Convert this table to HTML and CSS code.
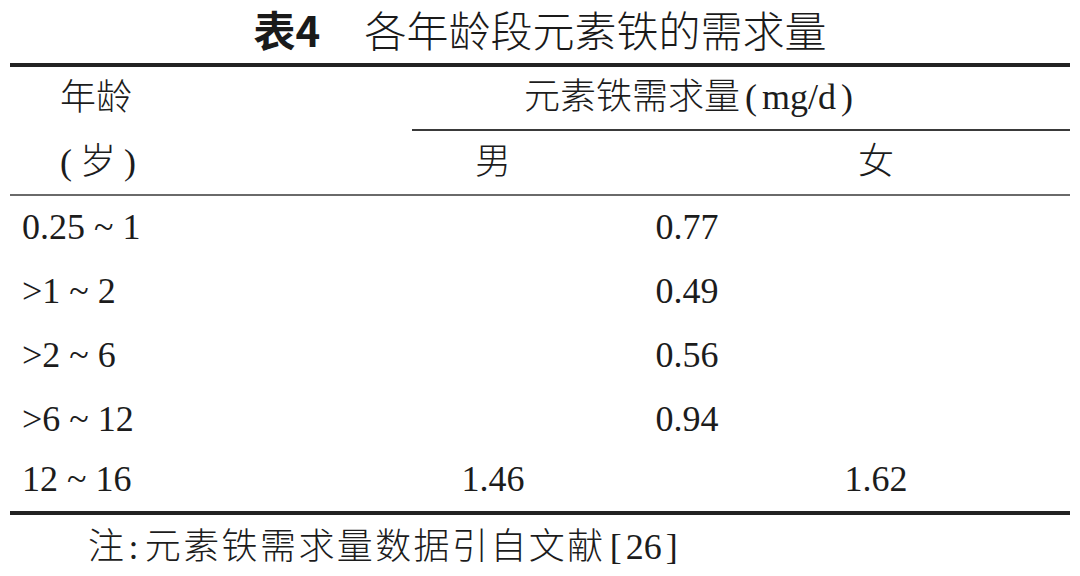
FILE: index.html
```html
<!DOCTYPE html>
<html lang="zh-CN">
<head>
<meta charset="utf-8">
<title>表4 各年龄段元素铁的需求量</title>
<link rel="stylesheet" href="styles.css">
</head>
<body>
<div class="page">
  <h1 class="title"><span class="title-no">表4</span><span class="title-text">各年龄段元素铁的需求量</span></h1>
  <div class="table">
    <div class="cell head-age">年龄</div>
    <div class="cell head-span">元素铁需求量<span class="paren">(</span>mg/d<span class="paren">)</span></div>
    <div class="cell head-age sub"><span class="paren">(</span>岁<span class="paren">)</span></div>
    <div class="cell head-sex sub">男</div>
    <div class="cell head-sex sub">女</div>

    <div class="cell age">0.25 ~ 1</div>
    <div class="cell val span">0.77</div>

    <div class="cell age">&gt;1 ~ 2</div>
    <div class="cell val span">0.49</div>

    <div class="cell age">&gt;2 ~ 6</div>
    <div class="cell val span">0.56</div>

    <div class="cell age">&gt;6 ~ 12</div>
    <div class="cell val span">0.94</div>

    <div class="cell age last">12 ~ 16</div>
    <div class="cell val last">1.46</div>
    <div class="cell val last">1.62</div>
  </div>
  <p class="note"><span class="note-text">注<span class="colon">:</span>元素铁需求量数据引自文献</span><span class="bracket">[</span>26<span class="bracket">]</span></p>
</div>
</body>
</html>
```

FILE: styles.css
```css
html, body {
  margin: 0;
  padding: 0;
  background: #ffffff;
}

body {
  width: 1080px;
  height: 576px;
  overflow: hidden;
  color: #1c1c1c;
  font-family: "Liberation Serif", "Noto Sans CJK SC", serif;
  font-weight: 300;
}

.page {
  display: flex;
  flex-direction: column;
}

.title {
  margin: 0;
  padding: 2px 0 7px;
  display: flex;
  justify-content: center;
  align-items: center;
  gap: 44px;
  font-size: 42px;
  line-height: 54px;
  font-weight: 300;
  font-family: "Noto Sans CJK SC", sans-serif;
  color: #1a1a1a;
}

.title-no {
  font-weight: 700;
}

.title-text {
  font-weight: 300;
}

.table {
  margin: 0 10px;
  display: grid;
  grid-template-columns: 294px 378px 388px;
  grid-template-rows: 64px 65px 64px 64px 64px 64px 59px;
  border-top: 4px solid #222;
  border-bottom: 4px solid #222;
  font-size: 36px;
  line-height: 1.2;
}

.cell {
  display: flex;
  align-items: center;
}

.head-age {
  padding-left: 50px;
}

.head-span {
  grid-column: 2 / 4;
  justify-content: center;
  background: linear-gradient(#3a3a3a, #3a3a3a) no-repeat right bottom / calc(100% - 108px) 2px;
  padding-bottom: 2px;
  padding-left: 8px;
}

.paren {
  margin: 0 5px;
}

.head-age.sub .paren:first-child {
  margin-left: 0;
  margin-right: 8px;
}

.head-age.sub .paren:last-child {
  margin-left: 8px;
}

.sub {
  border-bottom: 2px solid #6a6a6a;
}

.head-sex {
  justify-content: center;
}

.age {
  padding-left: 12px;
}

.val {
  justify-content: center;
}

.val.span {
  grid-column: 2 / 4;
}

.last {
  padding-bottom: 4px;
}

.note {
  margin: 0;
  height: 61px;
  box-sizing: border-box;
  padding-top: 5px;
  display: flex;
  align-items: center;
  padding-left: 88px;
  font-size: 36px;
  line-height: 1.2;
}

.note-text {
  letter-spacing: 2.4px;
}

.colon {
  margin: 0 4px 0 2px;
}

.bracket {
  margin: 0 4px;
}
```
